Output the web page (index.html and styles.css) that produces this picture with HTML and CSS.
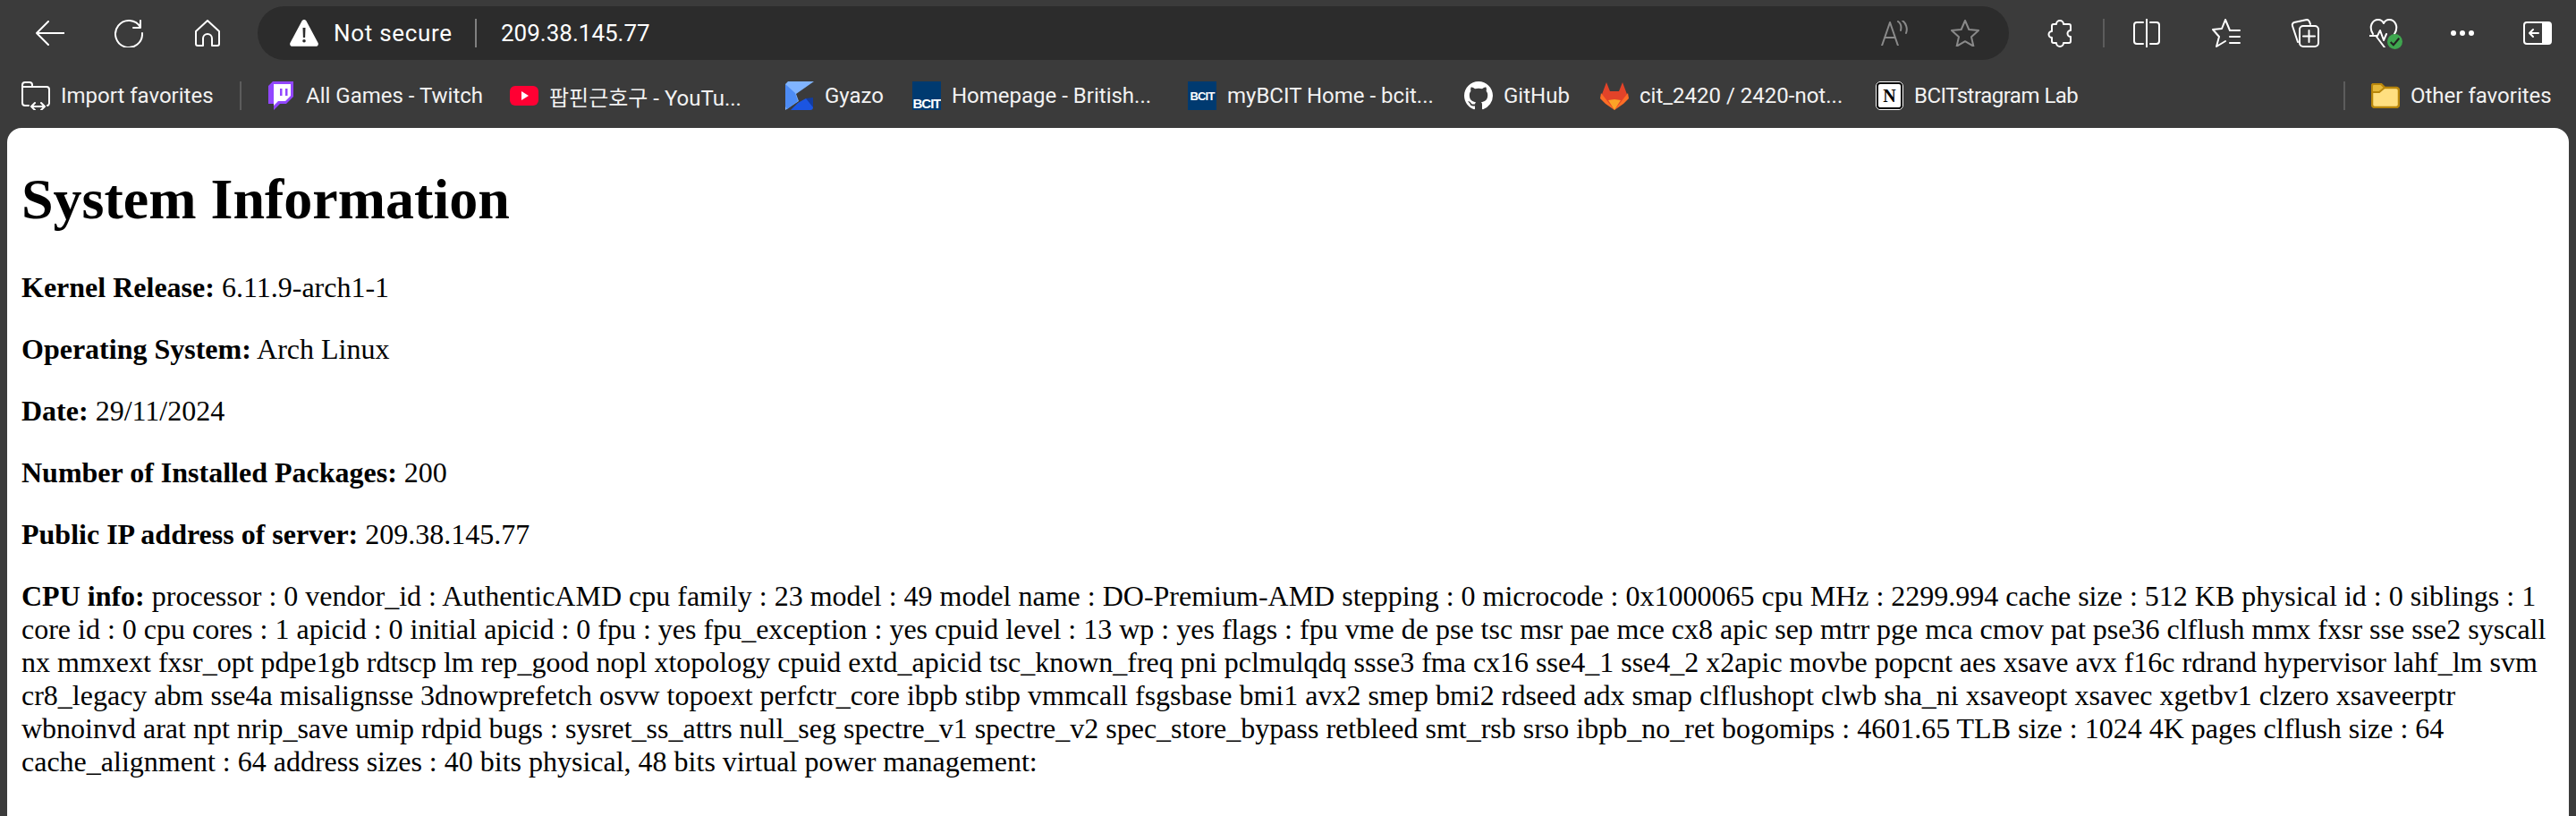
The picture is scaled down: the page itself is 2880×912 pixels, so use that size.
FILE: index.html
```html
<!DOCTYPE html>
<html lang="en">
<head>
<meta charset="utf-8">
<title>System Information</title>
<link rel="stylesheet" href="styles.css">
</head>
<body>
<div class="chrome">
  <div class="toolbar">
    <svg class="nav nav-back" viewBox="0 0 32 28"><path d="M14 1 1 14l13 13M1 14h31"/></svg>
    <svg class="nav nav-reload" viewBox="0 0 32 32"><path d="M29 2v8h-8M29 9.500A15 15 0 1 0 31 16"/></svg>
    <svg class="nav nav-home" viewBox="0 0 28 30"><path d="M14 1 1 13v14a2 2 0 0 0 2 2h6v-8a5 5 0 0 1 10 0v8h6a2 2 0 0 0 2-2V13z"/></svg>
    <div class="address">
      <svg class="warn" viewBox="0 0 32 30"><path class="warn-tri" d="M16 0c1 0 2 .5 2.500 1.500L31.600 26c.8 1.800-.3 3.800-2.400 3.800H2.800C.7 29.800-.4 27.800.4 26L13.500 1.500C14 .5 15 0 16 0z"/><path class="warn-mark" d="M14.500 9h3l-.4 11h-2.200zM16 22a1.800 1.800 0 1 1 0 3.600 1.800 1.800 0 0 1 0-3.600z"/></svg>
      <span class="not-secure">Not secure</span>
      <span class="addr-sep"></span>
      <span class="url">209.38.145.77</span>
      <svg class="read" viewBox="0 0 30 28"><path d="M1 28 10 2l9 26M4 19h12M19 1c3 2 4 6 3 10M24 0c4 3 6 9 4 14"/></svg>
      <svg class="star" viewBox="0 0 32 30"><path d="m16 1 4.300 10 10.700 1-8 7.200 2.400 10.500L16 24.200 6.600 29.700 9 19.200 1 12l10.700-1z"/></svg>
    </div>
    <svg class="tool tool-puzzle" viewBox="0 0 28 32"><path d="M10 6a4 4 0 0 1 8 0h6a2 2 0 0 1 2 2v5a3.500 3.500 0 0 0 0 7v5a2 2 0 0 1-2 2h-6a4 4 0 0 1-8 0H7a2 2 0 0 1-2-2v-4a3.500 3.500 0 0 1 0-7V8a2 2 0 0 1 2-2z"/></svg>
    <span class="tool-sep"></span>
    <svg class="tool tool-split" viewBox="0 0 30 32"><path d="M15 0v32M11 4H4a3 3 0 0 0-3 3v18a3 3 0 0 0 3 3h7M19 4h7a3 3 0 0 1 3 3v18a3 3 0 0 1-3 3h-7"/></svg>
    <svg class="tool tool-fav" viewBox="0 0 32 32"><path d="M20 13 15 1l-4 10-10 1 7 8-3 11 10-6M20 13h11M20 20h11M20 27h11"/></svg>
    <svg class="tool tool-coll" viewBox="0 0 32 32"><path d="M8 26 2 8a3 3 0 0 1 2-4l14-3c2 0 3 1 4 5"/><rect x="10" y="8" width="21" height="23" rx="4"/><path d="M20.500 13v13M14 19.500h13"/></svg>
    <div class="tool-heart">
      <svg class="heart" viewBox="0 0 32 32"><path d="M4 17C-1 9 3 1 10 1c3 0 5 2 6 4 1-2 3-4 6-4 7 0 11 8 6 16M0 19h9l3-6 4 11 3-7M8 20l9 12"/></svg>
      <span class="badge"><svg viewBox="0 0 16 16"><path d="m3.500 8.500 3 3 6-7"/></svg></span>
    </div>
    <div class="dots"><i></i><i></i><i></i></div>
    <svg class="tool tool-side" viewBox="0 0 32 32"><rect x="1" y="4" width="30" height="24" rx="3"/><path class="side-fill" d="M21 4h7a3 3 0 0 1 3 3v18a3 3 0 0 1-3 3h-7z"/><path d="M17 16H7M11 12l-4 4 4 4"/></svg>
  </div>
  <div class="favbar">
    <a class="bm bm-import"><svg class="ic ic-import" viewBox="0 0 32 32"><path d="M8 27H4a3 3 0 0 1-3-3V4a3 3 0 0 1 3-3h5a3 3 0 0 1 3 3v2h16a3 3 0 0 1 3 3v15a3 3 0 0 1-2 3M1 6h11M12 28h13M15 24l-4 4 4 4M22 24l4 4-4 4"/></svg><span>Import favorites</span></a>
    <span class="fav-sep fav-sep-a"></span>
    <a class="bm bm-twitch"><svg class="ic" viewBox="0 0 32 32"><path fill="#9146ff" d="M7 0h23v17l-8 8h-7l-7 7v-7H2V5z"/><path fill="#fff" d="M8 3h19v13l-6 6h-8l-5 5v-5H8z"/><path fill="#9146ff" d="M15 8h2.500v8H15zM21 8h2.500v8H21z"/></svg><span>All Games - Twitch</span></a>
    <a class="bm bm-yt"><svg class="ic" viewBox="0 0 32 32"><rect y="5" width="32" height="22" rx="6" fill="#f03"/><path fill="#fff" d="m13 11 8 5-8 5z"/></svg><span>팝핀근호구 - YouTu...</span></a>
    <a class="bm bm-gyazo"><svg class="ic" viewBox="0 0 32 32"><path fill="#80b4ff" d="M3 0h29L12 14l3 8-15 10V3z"/><path fill="#4d8cf5" d="M0 3l11 10 3 9-12 9-2-3z"/><path fill="#1b55e2" d="M23 19h8v10a3 3 0 0 1-3 3H6l8-8z"/><path fill="#123c9f" d="m23 19 8-1v11z"/></svg><span>Gyazo</span></a>
    <a class="bm bm-bcit1"><span class="bcit bcit-low">BCIT</span><span>Homepage - British...</span></a>
    <a class="bm bm-bcit2"><span class="bcit bcit-mid">BCIT</span><span>myBCIT Home - bcit...</span></a>
    <a class="bm bm-gh"><svg class="ic" viewBox="0 0 16 16"><path fill="#fff" d="M8 0C3.580 0 0 3.580 0 8c0 3.540 2.290 6.530 5.470 7.590.4.070.55-.17.55-.38 0-.19-.01-.82-.01-1.490-2.010.37-2.530-.49-2.690-.94-.09-.23-.48-.94-.82-1.130-.28-.15-.68-.52-.01-.53.63-.01 1.080.58 1.230.82.720 1.210 1.870.87 2.330.66.070-.52.280-.87.510-1.070-1.780-.2-3.640-.89-3.640-3.950 0-.87.310-1.590.82-2.150-.08-.2-.36-1.020.08-2.120 0 0 .67-.21 2.200.82.640-.18 1.320-.27 2-.27s1.360.09 2 .27c1.530-1.040 2.200-.82 2.200-.82.440 1.100.160 1.920.08 2.120.51.560.82 1.270.82 2.150 0 3.070-1.870 3.750-3.650 3.950.29.250.54.730.54 1.480 0 1.070-.01 1.930-.01 2.200 0 .21.150.46.550.38A8.010 8.010 0 0 0 16 8c0-4.420-3.580-8-8-8z"/></svg><span>GitHub</span></a>
    <a class="bm bm-gl"><svg class="ic" viewBox="0 0 32 32"><path fill="#e24329" d="M7 1l4 10h10l4-10 6 16-15 15L1 17z"/><path fill="#fc6d26" d="M1 13l15 19L6 25 0 19zM31 13 16 32l10-7 6-6z"/><path fill="#fca326" d="m9 21 7-1 7 1-7 11z"/></svg><span>cit_2420 / 2420-not...</span></a>
    <a class="bm bm-notion"><span class="notion">N</span><span class="tight">BCITstragram Lab</span></a>
    <span class="fav-sep fav-sep-b"></span>
    <a class="bm bm-other"><svg class="ic ic-folder" viewBox="0 0 32 28"><path fill="#ffdf80" stroke="#b8860b" stroke-width="2.500" d="M3 1h8l4 4h13a3 3 0 0 1 3 3v16a3 3 0 0 1-3 3H4a3 3 0 0 1-3-3V3a2 2 0 0 1 2-2z"/><path fill="#e5b83a" stroke="#b8860b" stroke-width="2" d="M1 10h8l6-5-4-4H3a2 2 0 0 0-2 2z"/></svg><span>Other favorites</span></a>
  </div>
</div>
<main class="page">
  <article class="doc">
    <h1>System Information</h1>
    <p><strong>Kernel Release:</strong> 6.11.9-arch1-1</p>
    <p><strong>Operating System:</strong> Arch Linux</p>
    <p><strong>Date:</strong> 29/11/2024</p>
    <p><strong>Number of Installed Packages:</strong> 200</p>
    <p><strong>Public IP address of server:</strong> 209.38.145.77</p>
    <p><strong>CPU info:</strong> processor : 0 vendor_id : AuthenticAMD cpu family : 23 model : 49 model name : DO-Premium-AMD stepping : 0 microcode : 0x1000065 cpu MHz : 2299.994 cache size : 512 KB physical id : 0 siblings : 1 core id : 0 cpu cores : 1 apicid : 0 initial apicid : 0 fpu : yes fpu_exception : yes cpuid level : 13 wp : yes flags : fpu vme de pse tsc msr pae mce cx8 apic sep mtrr pge mca cmov pat pse36 clflush mmx fxsr sse sse2 syscall nx mmxext fxsr_opt pdpe1gb rdtscp lm rep_good nopl xtopology cpuid extd_apicid tsc_known_freq pni pclmulqdq ssse3 fma cx16 sse4_1 sse4_2 x2apic movbe popcnt aes xsave avx f16c rdrand hypervisor lahf_lm svm cr8_legacy abm sse4a misalignsse 3dnowprefetch osvw topoext perfctr_core ibpb stibp vmmcall fsgsbase bmi1 avx2 smep bmi2 rdseed adx smap clflushopt clwb sha_ni xsaveopt xsavec xgetbv1 clzero xsaveerptr wbnoinvd arat npt nrip_save umip rdpid bugs : sysret_ss_attrs null_seg spectre_v1 spectre_v2 spec_store_bypass retbleed smt_rsb srso ibpb_no_ret bogomips : 4601.65 TLB size : 1024 4K pages clflush size : 64 cache_alignment : 64 address sizes : 40 bits physical, 48 bits virtual power management:</p>
  </article>
</main>
</body>
</html>
```
FILE: styles.css
```css
* { box-sizing: border-box; }
html, body { margin: 0; height: 100%; }
body { background: #3b3b3b; display: flex; flex-direction: column; overflow: hidden; }
svg { display: block; flex: none; }

.chrome { height: 143px; flex: none; color: #fff; font-family: Roboto, "Noto Sans CJK KR", sans-serif; }
.toolbar { height: 74px; padding: 7px 0 7px 40px; display: flex; align-items: center; }
.nav, .tool, .read, .star, .heart { fill: none; stroke: #fff; stroke-width: 2; stroke-linecap: round; stroke-linejoin: round; }
.nav-back { width: 32px; height: 28px; margin-right: 56px; }
.nav-reload { width: 32px; height: 32px; margin-right: 58px; }
.nav-home { width: 28px; height: 30px; margin-right: 42px; }

.address { width: 1958px; height: 60px; border-radius: 30px; background: #2c2c2c; display: flex; align-items: center; padding-left: 36px; margin-right: 43px; }
.warn { width: 32px; height: 30px; margin-right: 17px; }
.warn-tri { fill: #fff; }
.warn-mark { fill: #2c2c2c; }
.not-secure { font-size: 26px; letter-spacing: .7px; width: 132px; white-space: nowrap; }
.addr-sep { width: 2px; height: 32px; background: #808080; margin: 0 27px 0 26px; }
.url { font-size: 26px; flex: 1; }
.read { width: 30px; height: 28px; stroke: #8a8a8a; margin-right: 48px; }
.star { width: 32px; height: 30px; stroke: #8a8a8a; margin-right: 33px; }

.tool { height: 32px; }
.tool-puzzle { width: 28px; margin-right: 34px; }
.tool-sep { width: 2px; height: 32px; background: #5c5c5c; margin-right: 32px; }
.tool-split { width: 30px; margin-right: 58px; }
.tool-fav { width: 32px; margin-right: 56px; }
.tool-coll { width: 32px; margin-right: 56px; }
.tool-heart { position: relative; width: 37px; height: 36px; margin-right: 54px; }
.heart { width: 32px; height: 32px; margin-top: 2px; }
.badge { position: absolute; right: 0; bottom: 0; width: 17px; height: 17px; border-radius: 50%; background: #3fa64f; }
.badge svg { width: 17px; height: 17px; fill: none; stroke: #222; stroke-width: 2; }
.dots { display: flex; gap: 4px; width: 26px; margin-right: 55px; }
.dots i { width: 6px; height: 6px; border-radius: 50%; background: #fff; }
.tool-side { width: 32px; }
.side-fill { fill: #fff; stroke: none; }

.favbar { height: 69px; padding: 17px 0 0 24px; display: flex; align-items: flex-start; font-size: 24px; }
.bm { display: flex; align-items: center; gap: 12px; height: 32px; white-space: nowrap; flex: none; color: #f2f2f2; }
.ic { width: 32px; height: 32px; }
.ic-import { fill: none; stroke: #fff; stroke-width: 2; stroke-linecap: round; stroke-linejoin: round; }
.ic-folder { height: 28px; }
.fav-sep { width: 2px; height: 32px; background: #5c5c5c; flex: none; }
.fav-sep-a { margin: 0 28px 0 0; }
.fav-sep-b { margin: 0 29px 0 0; }
.bm-import { width: 244px; }
.bm-twitch { width: 272px; }
.bm-yt { width: 308px; }
.bm-gyazo { width: 142px; }
.bm-bcit1 { width: 308px; }
.bm-bcit2 { width: 309px; }
.bm-gh { width: 152px; }
.bm-gl { width: 308px; }
.bm-notion { width: 523px; }
.tight { letter-spacing: -.5px; }
.bcit { width: 32px; height: 32px; background: #003a70; color: #fff; font: 700 15px/1 "Liberation Sans", sans-serif; letter-spacing: -1px; display: flex; justify-content: center; overflow: hidden; }
.bcit-low { align-items: flex-end; }
.bcit-mid { align-items: center; font-size: 13px; letter-spacing: -.8px; }
.notion { width: 31px; height: 32px; background: #fff; border: 3px solid #000; outline: 1px solid #fff; outline-offset: -1px; border-radius: 5px; color: #000; font: 700 20px/26px "Liberation Serif", serif; text-align: center; }

.page { flex: 1; margin: 0 8px; background: #fff; border-radius: 16px 16px 0 0; display: flow-root; color: #000; font: 32px/37px "Liberation Serif", "Times New Roman", serif; }
.doc { margin: 0 16px; }
h1 { font-size: 64px; line-height: 74px; margin: 43px 0; }
p { margin: 32px 0; }
```
